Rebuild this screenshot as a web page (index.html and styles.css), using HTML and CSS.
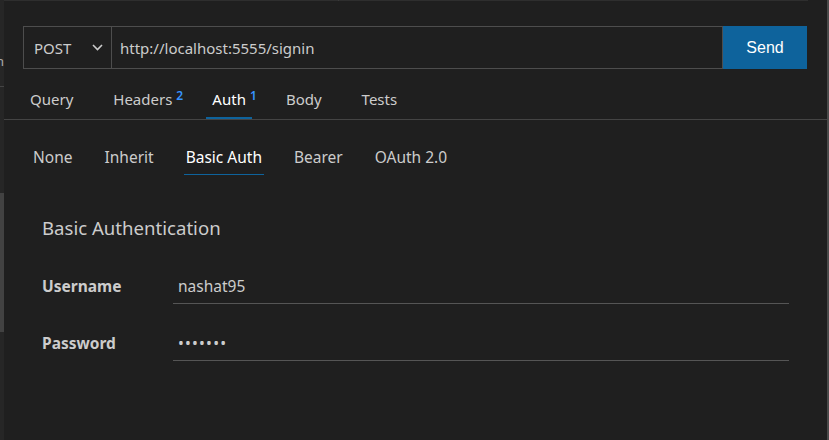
FILE: index.html
```html
<!DOCTYPE html>
<html lang="en">
<head>
<meta charset="utf-8">
<title>Thunder Client - Auth</title>
<link rel="stylesheet" href="styles.css">
</head>
<body>
<div class="app">
  <div class="gutter">
    <span class="frag">n'</span>
    <div class="gutter-sep"></div>
    <div class="thumb"></div>
  </div>
  <main class="panel">
    <div class="topline"><span class="seg seg-a"></span><span class="seg seg-b"></span><span class="seg seg-c"></span></div>
    <div class="req">
      <div class="method">
        <span class="method-name">POST</span>
        <svg class="chev" width="11" height="7" viewBox="0 0 11 7"><path d="M1 1 L5.5 5.5 L10 1" fill="none" stroke="#cccccc" stroke-width="1.6"/></svg>
      </div>
      <div class="url">http://localhost:5555/signin</div>
      <button class="send">Send</button>
    </div>
    <nav class="tabs">
      <span class="tab">Query</span>
      <span class="tab">Headers<sup class="badge">2</sup></span>
      <span class="tab active">Auth<sup class="badge">1</sup></span>
      <span class="tab">Body</span>
      <span class="tab">Tests</span>
    </nav>
    <nav class="subtabs">
      <span class="subtab">None</span>
      <span class="subtab">Inherit</span>
      <span class="subtab active">Basic Auth</span>
      <span class="subtab">Bearer</span>
      <span class="subtab">OAuth 2.0</span>
    </nav>
    <h2 class="heading">Basic Authentication</h2>
    <div class="fields">
      <div class="field">
        <label class="label">Username</label>
        <div class="value">nashat95</div>
      </div>
      <div class="field">
        <label class="label">Password</label>
        <div class="value dots">•••••••</div>
      </div>
    </div>
  </main>
  <div class="rborder"></div>
</div>
</body>
</html>
```
FILE: styles.css
```css
* { box-sizing: border-box; }
html, body { margin: 0; padding: 0; }
body {
  background: #1f1f1f;
  font-family: "Noto Sans", "Open Sans", sans-serif;
  color: #cccccc;
  width: 829px;
  height: 440px;
  overflow: hidden;
}
.app {
  display: flex;
  height: 440px;
}
.gutter {
  width: 4px;
  flex: none;
  background: #262626;
  position: relative;
  overflow: hidden;
  display: flex;
  flex-direction: column;
}
.frag {
  position: absolute;
  left: -4px;
  top: 52px;
  font-size: 13px;
  color: #aaaaaa;
}
.gutter-sep {
  margin-top: 86px;
  height: 1px;
  background: #444;
}
.thumb {
  margin-top: 106px;
  height: 139px;
  background: #424242;
}
.panel {
  flex: 1;
  display: flex;
  flex-direction: column;
}
.topline {
  height: 1px;
  display: flex;
}
.seg { height: 1px; background: #2e2e2e; }
.seg-a { width: 334px; }
.seg-b { width: 1px; background: #3a3a3a; }
.seg-c { width: 469px; }
.req {
  display: flex;
  margin: 25px 20px 0 19px;
  height: 43px;
}
.method {
  display: flex;
  align-items: center;
  width: 88px;
  border: 1px solid #4d4d4d;
  border-right: none;
  padding: 0 0 0 10px;
  font-size: 15px;
  color: #cccccc;
}
.method-name { flex: 1; }
.chev { margin-right: 8px; }
.url {
  flex: 1;
  display: flex;
  align-items: center;
  border: 1px solid #4d4d4d;
  padding-left: 8px;
  font-size: 15px;
  color: #cccccc;
}
.send {
  width: 84px;
  border: none;
  background: #0e639c;
  color: #ffffff;
  font-family: "Liberation Sans", Arial, sans-serif;
  font-size: 16px;
  padding: 0;
}
.tabs {
  display: flex;
  gap: 28px;
  margin-top: 12px;
  padding-left: 20px;
  border-bottom: 1px solid #444444;
  height: 39px;
}
.tab {
  position: relative;
  padding: 0 6px;
  font-size: 15px;
  line-height: 36px;
  height: 38px;
  color: #cccccc;
  border-bottom: 2px solid transparent;
}
.tab.active {
  color: #ffffff;
  border-bottom-color: #0e639c;
}
.badge {
  position: absolute;
  left: calc(100% - 2px);
  top: 9px;
  font-size: 12px;
  font-weight: 600;
  line-height: 12px;
  color: #3794ff;
}
.subtabs {
  display: flex;
  gap: 28px;
  margin-top: 21px;
  padding-left: 27px;
}
.subtab {
  padding: 0 2px;
  font-size: 15.5px;
  line-height: 32px;
  height: 34px;
  border-bottom: 1px solid transparent;
  color: #cccccc;
}
.subtab.active {
  color: #ffffff;
  border-bottom-color: #0e639c;
}
.heading {
  margin: 39px 0 0 38px;
  font-size: 18.6px;
  font-weight: 400;
  line-height: 28px;
  color: #cccccc;
}
.fields {
  margin: 5px 0 0 38px;
  width: 747px;
  display: flex;
  flex-direction: column;
}
.field {
  display: flex;
  align-items: stretch;
  height: 57px;
}
.label {
  width: 131px;
  font-size: 15.5px;
  font-weight: 700;
  color: #cccccc;
  display: flex;
  align-items: flex-end;
  padding-bottom: 7px;
}
.value {
  flex: 1;
  border-bottom: 1px solid #555555;
  font-size: 15.5px;
  padding-left: 5px;
  display: flex;
  align-items: flex-end;
  padding-bottom: 6px;
  color: #cccccc;
}
.dots { letter-spacing: 1.2px; }
.rborder {
  width: 2px;
  flex: none;
  background: #4a4a4a;
}
```
